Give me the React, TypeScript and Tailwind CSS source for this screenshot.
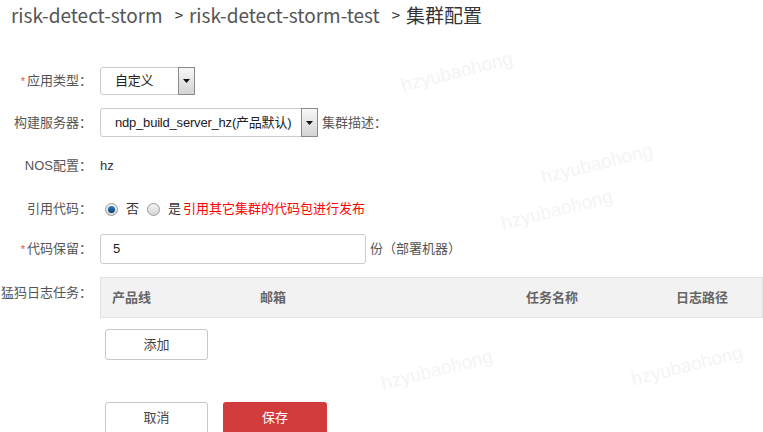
import React from "react";

const font = { fontFamily: '"Liberation Sans", "Noto Sans CJK SC", sans-serif' };

function Label({ text, required }: { text: string; required?: boolean }) {
  return (
    <div className="flex w-[92px] shrink-0 items-center justify-end whitespace-nowrap text-[13px] text-[#555]">
      {required && <span className="mr-[2px] text-[11px] text-[#e5505a]">*</span>}
      <span>{text}</span>
    </div>
  );
}

function SelectBox({ value, width }: { value: string; width: string }) {
  return (
    <div className={`flex h-full items-stretch rounded-[3px] border border-[#ccc] bg-white ${width}`}>
      <div className="flex flex-1 items-center whitespace-nowrap pl-[14px] text-[13px] tracking-[-0.2px] text-[#222]">{value}</div>
      <div className="my-[-1px] mr-[-1px] flex w-[17px] items-center justify-center border border-[#8a8a8a] bg-gradient-to-b from-[#f7f7f7] to-[#d4d4d4]">
        <svg width="7" height="4" viewBox="0 0 7 4">
          <path d="M0 0H7L3.5 4Z" fill="#111" />
        </svg>
      </div>
    </div>
  );
}

function Radio({ checked }: { checked?: boolean }) {
  return (
    <span className="flex h-[13px] w-[13px] items-center justify-center rounded-full border border-[#9a9a9a] bg-gradient-to-b from-[#f3f3f3] to-[#d6d6d6]">
      {checked && <span className="h-[7px] w-[7px] rounded-full bg-gradient-to-b from-[#2d7fc4] to-[#0a3f70]" />}
    </span>
  );
}

// faint "hzyubaohong" watermark, kept to the empty areas
const marks = [
  { x: 400, y: 58 },
  { x: 540, y: 150 },
  { x: 500, y: 196 },
  { x: 630, y: 352 },
  { x: 380, y: 356 },
];

export default function App() {
  return (
    <div className="relative h-[432px] w-[763px] overflow-hidden bg-white" style={font}>
      {marks.map((m, i) => (
        <span
          key={i}
          className="pointer-events-none absolute -rotate-[14deg] text-[19px] text-[#f4f4f4]"
          style={{ left: m.x, top: m.y }}
        >
          hzyubaohong
        </span>
      ))}

      <div className="relative">
        <div className="flex h-[30px] items-center whitespace-nowrap pl-[11px] text-[19px] text-[#555]" style={{ fontFamily: '"Noto Sans CJK SC", sans-serif' }}>
          <span>risk-detect-storm</span>
          <span className="ml-[12px] mr-[6px] text-[15px] text-[#333]">&gt;</span>
          <span>risk-detect-storm-test</span>
          <span className="ml-[12px] mr-[6px] text-[15px] text-[#333]">&gt;</span>
          <span className="text-[#333]">集群配置</span>
        </div>

        <div className="mt-[37px] flex h-[28px] gap-[8px]">
          <Label text="应用类型：" required />
          <SelectBox value="自定义" width="w-[95px]" />
        </div>

        <div className="mt-[13px] flex h-[29px] gap-[8px]">
          <Label text="构建服务器：" />
          <SelectBox value="ndp_build_server_hz(产品默认)" width="w-[218px]" />
          <div className="ml-[-4px] flex items-center text-[13px] text-[#555]">集群描述：</div>
        </div>

        <div className="mt-[15px] flex h-[28px] gap-[8px]">
          <Label text="NOS配置：" />
          <div className="flex items-center text-[13px] text-[#333]">hz</div>
        </div>

        <div className="mt-[15px] flex h-[28px] gap-[8px]">
          <Label text="引用代码：" />
          <div className="flex items-center whitespace-nowrap pl-[5px] text-[13px] text-[#333]">
            <Radio checked />
            <span className="ml-[8px] mr-[8px]">否</span>
            <Radio />
            <span className="ml-[8px] mr-[2px]">是</span>
            <span className="text-[#f00]">引用其它集群的代码包进行发布</span>
          </div>
        </div>

        <div className="mt-[11px] flex h-[30px] gap-[8px]">
          <Label text="代码保留：" required />
          <div className="flex w-[266px] items-center rounded-[3px] border border-[#ccc] pl-[12px] text-[13px] text-[#222]">5</div>
          <div className="ml-[-4px] flex items-center whitespace-nowrap text-[13px] text-[#555]">份（部署机器）</div>
        </div>

        <div className="mt-[13px] flex gap-[8px]">
          <div className="flex h-[32px] w-[92px] shrink-0 items-center justify-end whitespace-nowrap text-[13px] text-[#555]">猛犸日志任务：</div>
          <div className="flex-1">
            <div className="flex h-[41px] items-center whitespace-nowrap border border-[#e2e2e2] bg-[#f2f2f2] text-[13px] font-bold text-[#666]">
              <span className="w-[159px] pl-[11px]">产品线</span>
              <span className="w-[266px]">邮箱</span>
              <span className="w-[150px]">任务名称</span>
              <span>日志路径</span>
            </div>
            <button className="ml-[5px] mt-[11px] h-[31px] w-[103px] rounded-[3px] border border-[#c8c8c8] bg-white text-[13px] text-[#444]">
              添加
            </button>
          </div>
        </div>

        <div className="ml-[105px] mt-[42px] flex gap-[15px]">
          <button className="h-[32px] w-[103px] rounded-[3px] border border-[#c8c8c8] bg-white text-[13px] text-[#444]">取消</button>
          <button className="h-[32px] w-[104px] rounded-[3px] bg-[#d13b3b] text-[13px] text-white">保存</button>
        </div>
      </div>
    </div>
  );
}
